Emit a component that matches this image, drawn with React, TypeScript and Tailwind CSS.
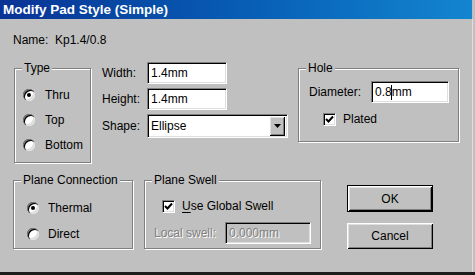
import React from 'react';

const sunken =
  'border border-t-[#808080] border-l-[#808080] border-b-white border-r-white shadow-[inset_1px_1px_0_#000,inset_-1px_-1px_0_#dfdfdf]';
const raised =
  'shadow-[inset_1px_1px_0_#fff,inset_-1px_-1px_0_#000,inset_2px_2px_0_#dfdfdf,inset_-2px_-2px_0_#808080]';
const disabled = 'text-[#808080] [text-shadow:1px_1px_0_#fff]';

const Group = ({ label, className, children }: { label: string; className: string; children?: React.ReactNode }) => (
  <div
    className={`flex flex-col border border-[#808080] shadow-[inset_1px_1px_0_#fff,1px_1px_0_#fff] ${className}`}
  >
    <span className="-mt-[8px] ml-[7px] self-start whitespace-nowrap bg-[#c0c0c0] px-[2px] leading-[14px]">{label}</span>
    {children}
  </div>
);

const Radio = ({ label, checked, className }: { label: string; checked?: boolean; className: string }) => (
  <div className={`flex items-center ${className}`}>
    <span className="flex h-[12px] w-[12px] items-center justify-center rounded-full bg-white shadow-[inset_1px_1px_0_#808080,inset_2px_2px_0_#000,inset_-2px_-2px_0_#dfdfdf]">
      {checked && <span className="h-[4px] w-[4px] rounded-full bg-black" />}
    </span>
    <span>{label}</span>
  </div>
);

const Check = () => (
  <span className={`flex h-[13px] w-[13px] items-center justify-center bg-white ${sunken}`}>
    <svg width="9" height="9" viewBox="0 0 9 9">
      <polyline points="1,4 3.5,6.5 8,1.5" fill="none" stroke="#000" strokeWidth="2" />
    </svg>
  </span>
);

const Field = ({ value, className }: { value: string; className: string }) => (
  <div className={`flex h-[22px] items-center bg-white pl-[3px] ${sunken} ${className}`}>{value}</div>
);

export default function App() {
  return (
    <div className="flex h-[275px] w-[475px] flex-col overflow-hidden bg-[#c0c0c0] font-['Liberation_Sans',Arial,sans-serif] text-[12px] leading-[14px] text-black">
      <div className="mr-[3px] flex h-[19px] shrink-0 items-center bg-gradient-to-r from-[#0a3296] to-[#1485d0] pl-[3px] text-[13.5px] font-bold text-white">
        Modify Pad Style (Simple)
      </div>

      <div className="mr-[2px] flex flex-1 flex-col border-r border-[#dfdfdf]">
        <div className="ml-[13px] mt-[14px] h-[14px]">Name:&nbsp; Kp1.4/0.8</div>

        <div className="mt-[21px] flex items-start">
          <Group label="Type" className="ml-[14px] h-[95px] w-[77px]">
            <div className="flex flex-col pl-[8px] pt-[7px]">
              <Radio label="Thru" checked className="h-[25px] gap-[10px]" />
              <Radio label="Top" className="h-[25px] gap-[10px]" />
              <Radio label="Bottom" className="h-[25px] gap-[10px]" />
            </div>
          </Group>

          <div className="-mt-[6px] ml-[11px] flex flex-col gap-[4px]">
            <div className="flex items-center">
              <span className="w-[45px]">Width:</span>
              <Field value="1.4mm" className="w-[80px]" />
            </div>
            <div className="flex items-center">
              <span className="w-[45px]">Height:</span>
              <Field value="1.4mm" className="w-[80px]" />
            </div>
            <div className="flex items-center">
              <span className="w-[45px]">Shape:</span>
              <div className={`flex h-[24px] w-[141px] items-center justify-between bg-white pl-[3px] pr-[2px] ${sunken}`}>
                <span>Ellipse</span>
                <span className={`flex h-[20px] w-[16px] items-center justify-center bg-[#c0c0c0] ${raised}`}>
                  <svg width="7" height="4" viewBox="0 0 7 4">
                    <polygon points="0,0 7,0 3.5,4" fill="#000" />
                  </svg>
                </span>
              </div>
            </div>
          </div>

          <Group label="Hole" className="ml-[10px] h-[74px] w-[161px]">
            <div className="flex flex-col pl-[10px]">
              <div className="mt-[6px] flex items-center">
                <span className="w-[62px]">Diameter:</span>
                <div className={`flex h-[22px] w-[78px] items-center bg-white pl-[3px] ${sunken}`}>
                  0.8
                  <span className="relative">
                    <span className="absolute -left-[1px] -top-[7px] h-[15px] w-[1px] bg-black" />
                  </span>
                  mm
                </div>
              </div>
              <div className="ml-[14px] mt-[9px] flex items-center gap-[7px]">
                <Check />
                <span>Plated</span>
              </div>
            </div>
          </Group>
        </div>

        <div className="mt-[17px] flex items-start">
          <Group label="Plane Connection" className="ml-[13px] h-[69px] w-[120px]">
            <div className="flex flex-col pl-[13px] pt-[8px]">
              <Radio label="Thermal" checked className="h-[26px] gap-[9px]" />
              <Radio label="Direct" className="h-[26px] gap-[9px]" />
            </div>
          </Group>

          <Group label="Plane Swell" className="ml-[11px] h-[69px] w-[177px]">
            <div className="ml-[17px] mt-[12px] flex items-center gap-[7px]">
              <Check />
              <span>
                <span className="underline underline-offset-2">U</span>se Global Swell
              </span>
            </div>
            <div className="ml-[9px] mt-[9px] flex items-center">
              <span className={`w-[71px] ${disabled}`}>Local swell:</span>
              <div className={`flex h-[22px] w-[86px] items-center bg-[#c0c0c0] pl-[3px] ${sunken} ${disabled}`}>
                0.000mm
              </div>
            </div>
          </Group>

          <div className="ml-[26px] mt-[5px] flex flex-col gap-[11px]">
            <button className={`flex h-[27px] w-[86px] items-center justify-center border border-black bg-[#c0c0c0] ${raised}`}>
              OK
            </button>
            <button className={`flex h-[26px] w-[86px] items-center justify-center bg-[#c0c0c0] ${raised}`}>
              Cancel
            </button>
          </div>
        </div>
      </div>

      <div className="h-[3px] shrink-0 bg-[#1c1c1c]" />
    </div>
  );
}
